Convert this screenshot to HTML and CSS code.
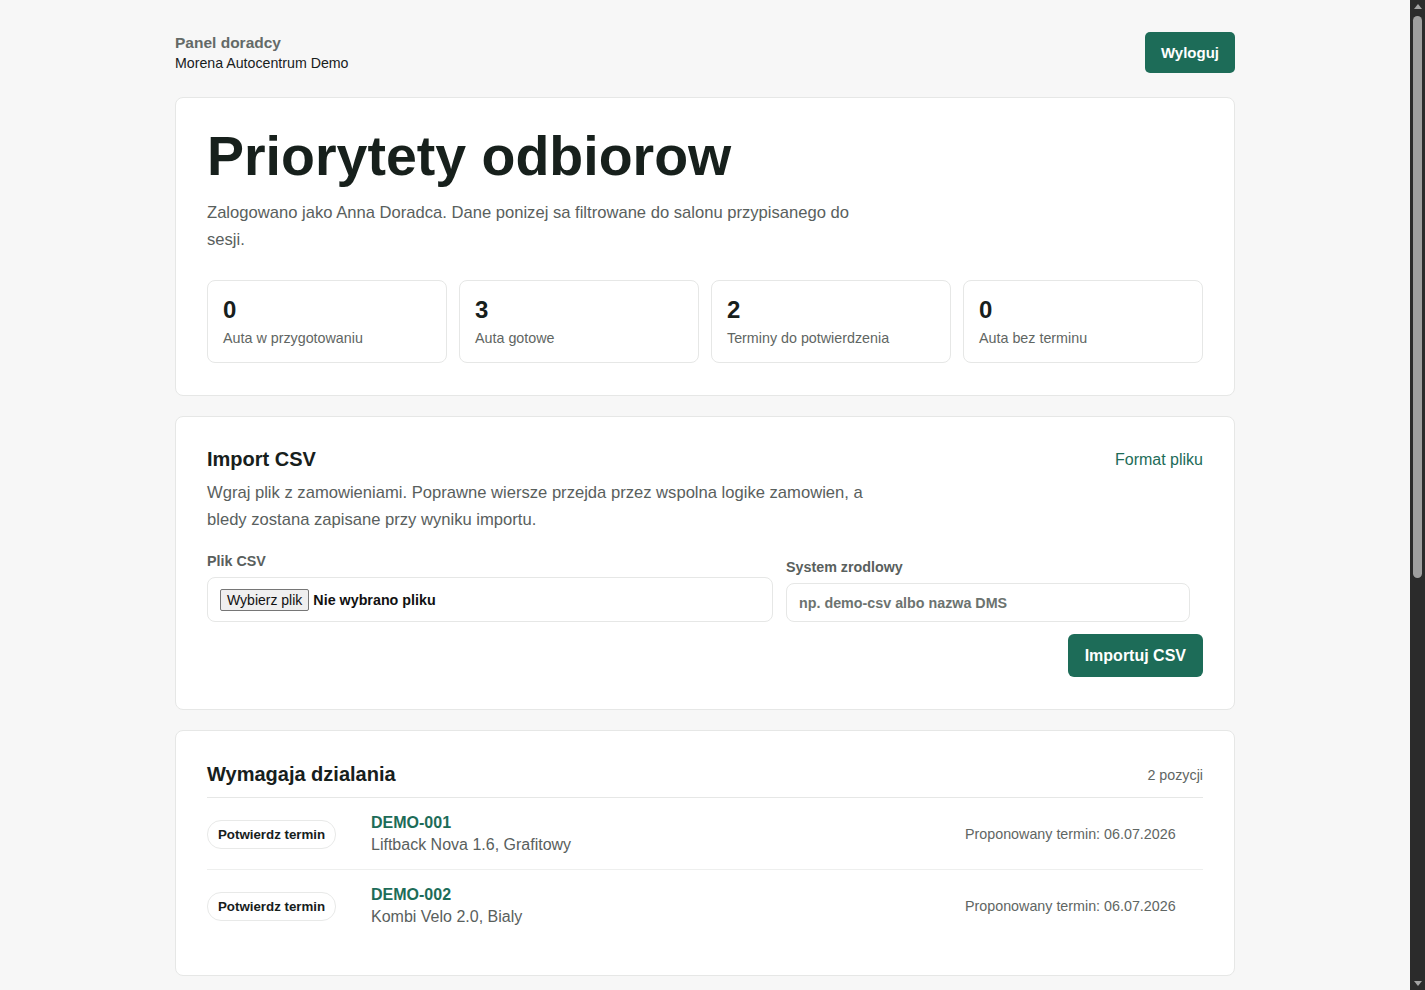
FILE: index.html
```html
<!DOCTYPE html>
<html lang="pl">
<head>
    <meta charset="UTF-8">
    <meta name="viewport" content="width=device-width, initial-scale=1.0">
    <title>Panel doradcy</title>
    <link rel="stylesheet" href="styles.css">
</head>
<body>
    <div class="page">
        <header class="topbar">
            <div>
                <div class="topbar-title">Panel doradcy</div>
                <div class="topbar-sub">Morena Autocentrum Demo</div>
            </div>
            <button class="btn">Wyloguj</button>
        </header>

        <section class="card card-summary">
            <h1>Priorytety odbiorow</h1>
            <p class="lead">Zalogowano jako Anna Doradca. Dane ponizej sa filtrowane do salonu przypisanego do sesji.</p>
            <div class="stats">
                <div class="stat"><strong>0</strong><span>Auta w przygotowaniu</span></div>
                <div class="stat"><strong>3</strong><span>Auta gotowe</span></div>
                <div class="stat"><strong>2</strong><span>Terminy do potwierdzenia</span></div>
                <div class="stat"><strong>0</strong><span>Auta bez terminu</span></div>
            </div>
        </section>

        <section class="card">
            <div class="card-head">
                <h2>Import CSV</h2>
                <a href="#" class="link">Format pliku</a>
            </div>
            <p class="lead">Wgraj plik z zamowieniami. Poprawne wiersze przejda przez wspolna logike zamowien, a bledy zostana zapisane przy wyniku importu.</p>
            <form class="import-form" onsubmit="return false">
                <div class="field">
                    <span class="field-label">Plik CSV</span>
                    <label class="file-box">
                        <input type="file" accept=".csv" class="file-hidden">
                        <span class="file-btn">Wybierz plik</span>
                        <span class="file-name">Nie wybrano pliku</span>
                    </label>
                </div>
                <label class="field">
                    <span class="field-label">System zrodlowy</span>
                    <input type="text" class="text-input" placeholder="np. demo-csv albo nazwa DMS">
                </label>
                <div class="form-actions">
                    <button class="btn btn-lg">Importuj CSV</button>
                </div>
            </form>
        </section>

        <section class="card card-list">
            <div class="card-head list-head">
                <h2>Wymagaja dzialania</h2>
                <span class="muted">2 pozycji</span>
            </div>
            <ul class="rows">
                <li class="row">
                    <span class="pill">Potwierdz termin</span>
                    <div>
                        <a href="#" class="row-id">DEMO-001</a>
                        <div class="row-sub">Liftback Nova 1.6, Grafitowy</div>
                    </div>
                    <span class="row-meta">Proponowany termin: 06.07.2026</span>
                </li>
                <li class="row">
                    <span class="pill">Potwierdz termin</span>
                    <div>
                        <a href="#" class="row-id">DEMO-002</a>
                        <div class="row-sub">Kombi Velo 2.0, Bialy</div>
                    </div>
                    <span class="row-meta">Proponowany termin: 06.07.2026</span>
                </li>
            </ul>
        </section>
    </div>

    <!-- window scrollbar as seen in the screenshot -->
    <div class="scrollbar">
        <span class="scroll-up"></span>
        <span class="scroll-thumb"></span>
        <span class="scroll-down"></span>
    </div>
</body>
</html>
```

FILE: styles.css
```css
body {
    font-family: "Liberation Sans", Arial, sans-serif;
    background-color: #f7f7f7;
    color: #17201c;
    margin: 0 15px 0 0;
    padding: 0;
}

.page {
    max-width: 1060px;
    margin: 0 auto;
    padding: 32px 0 0;
}

.topbar {
    display: flex;
    justify-content: space-between;
    align-items: flex-start;
    margin-bottom: 24px;
}

.topbar-title {
    font-size: 15.5px;
    font-weight: bold;
    color: #646a67;
    margin-top: 2px;
    margin-bottom: 3px;
}

.topbar-sub {
    font-size: 14.2px;
    color: #17201c;
}

.btn {
    font-family: inherit;
    background-color: #1d6c58;
    color: #fff;
    border: none;
    border-radius: 5px;
    font-size: 15px;
    font-weight: bold;
    height: 41px;
    padding: 0 16px;
    cursor: pointer;
}

.btn-lg {
    font-size: 16px;
    height: 43px;
    padding: 0 17px;
    border-radius: 6px;
}

.card {
    background-color: #fff;
    border: 1px solid #e6e7e6;
    border-radius: 8px;
    padding: 26px 31px 31px;
    margin-bottom: 20px;
}

.card-summary {
    padding-bottom: 32px;
}

.card-list {
    padding-bottom: 34px;
}

.card-list .card-head {
    margin-top: 6px;
}

h1 {
    font-size: 55.5px;
    line-height: 64px;
    margin: 0 0 12px;
    color: #17201c;
}

h2 {
    font-size: 20px;
    margin: 0;
    color: #17201c;
}

.lead {
    font-size: 16.6px;
    line-height: 26.5px;
    color: #59605d;
    max-width: 670px;
    margin: 0;
}

.stats {
    display: grid;
    grid-template-columns: repeat(4, 1fr);
    gap: 12px;
    margin-top: 27px;
}

.stat {
    border: 1px solid #e6e7e6;
    border-radius: 8px;
    padding: 15px 15px 16px;
    display: flex;
    flex-direction: column;
    gap: 6px;
}

.stat strong {
    font-size: 24px;
    line-height: 28px;
}

.stat span {
    font-size: 14.3px;
    color: #5f6663;
}

.card-head {
    display: flex;
    justify-content: space-between;
    align-items: center;
    margin-top: 5px;
    margin-bottom: 9px;
}

.link {
    color: #1d6c58;
    font-size: 16px;
    text-decoration: none;
}

.import-form {
    display: grid;
    grid-template-columns: 566px 404px;
    column-gap: 13px;
    align-items: end;
    margin-top: 20px;
}

.field {
    display: flex;
    flex-direction: column;
    gap: 8px;
}

.field-label {
    font-size: 14.3px;
    font-weight: bold;
    color: #59605d;
}

.file-box {
    display: flex;
    align-items: center;
    gap: 4px;
    height: 43px;
    border: 1px solid #e6e7e6;
    border-radius: 8px;
    padding: 0 12px;
    cursor: pointer;
}

.file-hidden {
    display: none;
}

.file-btn {
    font-size: 14px;
    background: #efefef;
    border: 1px solid #767676;
    border-radius: 2px;
    padding: 2px 6px;
    color: #111;
}

.file-name {
    font-size: 14.3px;
    font-weight: bold;
    color: #111;
}

.text-input {
    font-family: inherit;
    font-size: 14.3px;
    font-weight: bold;
    height: 39px;
    border: 1px solid #e6e7e6;
    border-radius: 8px;
    padding: 0 12px;
    box-sizing: border-box;
    color: #17201c;
}

.text-input::placeholder {
    color: #6c7370;
}

.form-actions {
    grid-column: 1 / -1;
    display: flex;
    justify-content: flex-end;
    margin-top: 12px;
    margin-right: -13px;
    margin-bottom: 1px;
}

.list-head {
    padding-bottom: 11px;
    margin-bottom: 0;
    border-bottom: 1px solid #e6e7e6;
}

.muted {
    font-size: 14.3px;
    color: #5f6663;
}

.rows {
    list-style: none;
    margin: 0;
    padding: 0;
}

.row {
    display: grid;
    grid-template-columns: 140px 1fr 238px;
    column-gap: 24px;
    align-items: center;
    padding: 16px 0 15px;
    border-bottom: 1px solid #eeefee;
}

.row:last-child {
    border-bottom: none;
}

.pill {
    justify-self: start;
    font-size: 13.3px;
    font-weight: bold;
    border: 1px solid #e8e9e8;
    border-radius: 14px;
    padding: 6px 10px;
    color: #17201c;
}

.row-id {
    display: block;
    font-size: 16px;
    font-weight: bold;
    color: #1d6c58;
    text-decoration: none;
    margin-bottom: 4px;
}

.row-sub {
    font-size: 16px;
    color: #59605d;
}

.row-meta {
    font-size: 14.3px;
    color: #5f6663;
}

.scrollbar {
    position: fixed;
    top: 0;
    right: 0;
    width: 15px;
    height: 100vh;
    background: #2b2b2b;
    display: flex;
    flex-direction: column;
    align-items: center;
}

.scroll-up,
.scroll-down {
    width: 0;
    height: 0;
    border-left: 4px solid transparent;
    border-right: 4px solid transparent;
}

.scroll-up {
    margin-top: 4px;
    border-bottom: 5px solid #a3a3a3;
}

.scroll-thumb {
    width: 9px;
    height: 562px;
    margin-top: 7px;
    background: #9f9f9f;
    border-radius: 5px;
}

.scroll-down {
    margin-top: auto;
    margin-bottom: 4px;
    border-top: 5px solid #a3a3a3;
}
```
